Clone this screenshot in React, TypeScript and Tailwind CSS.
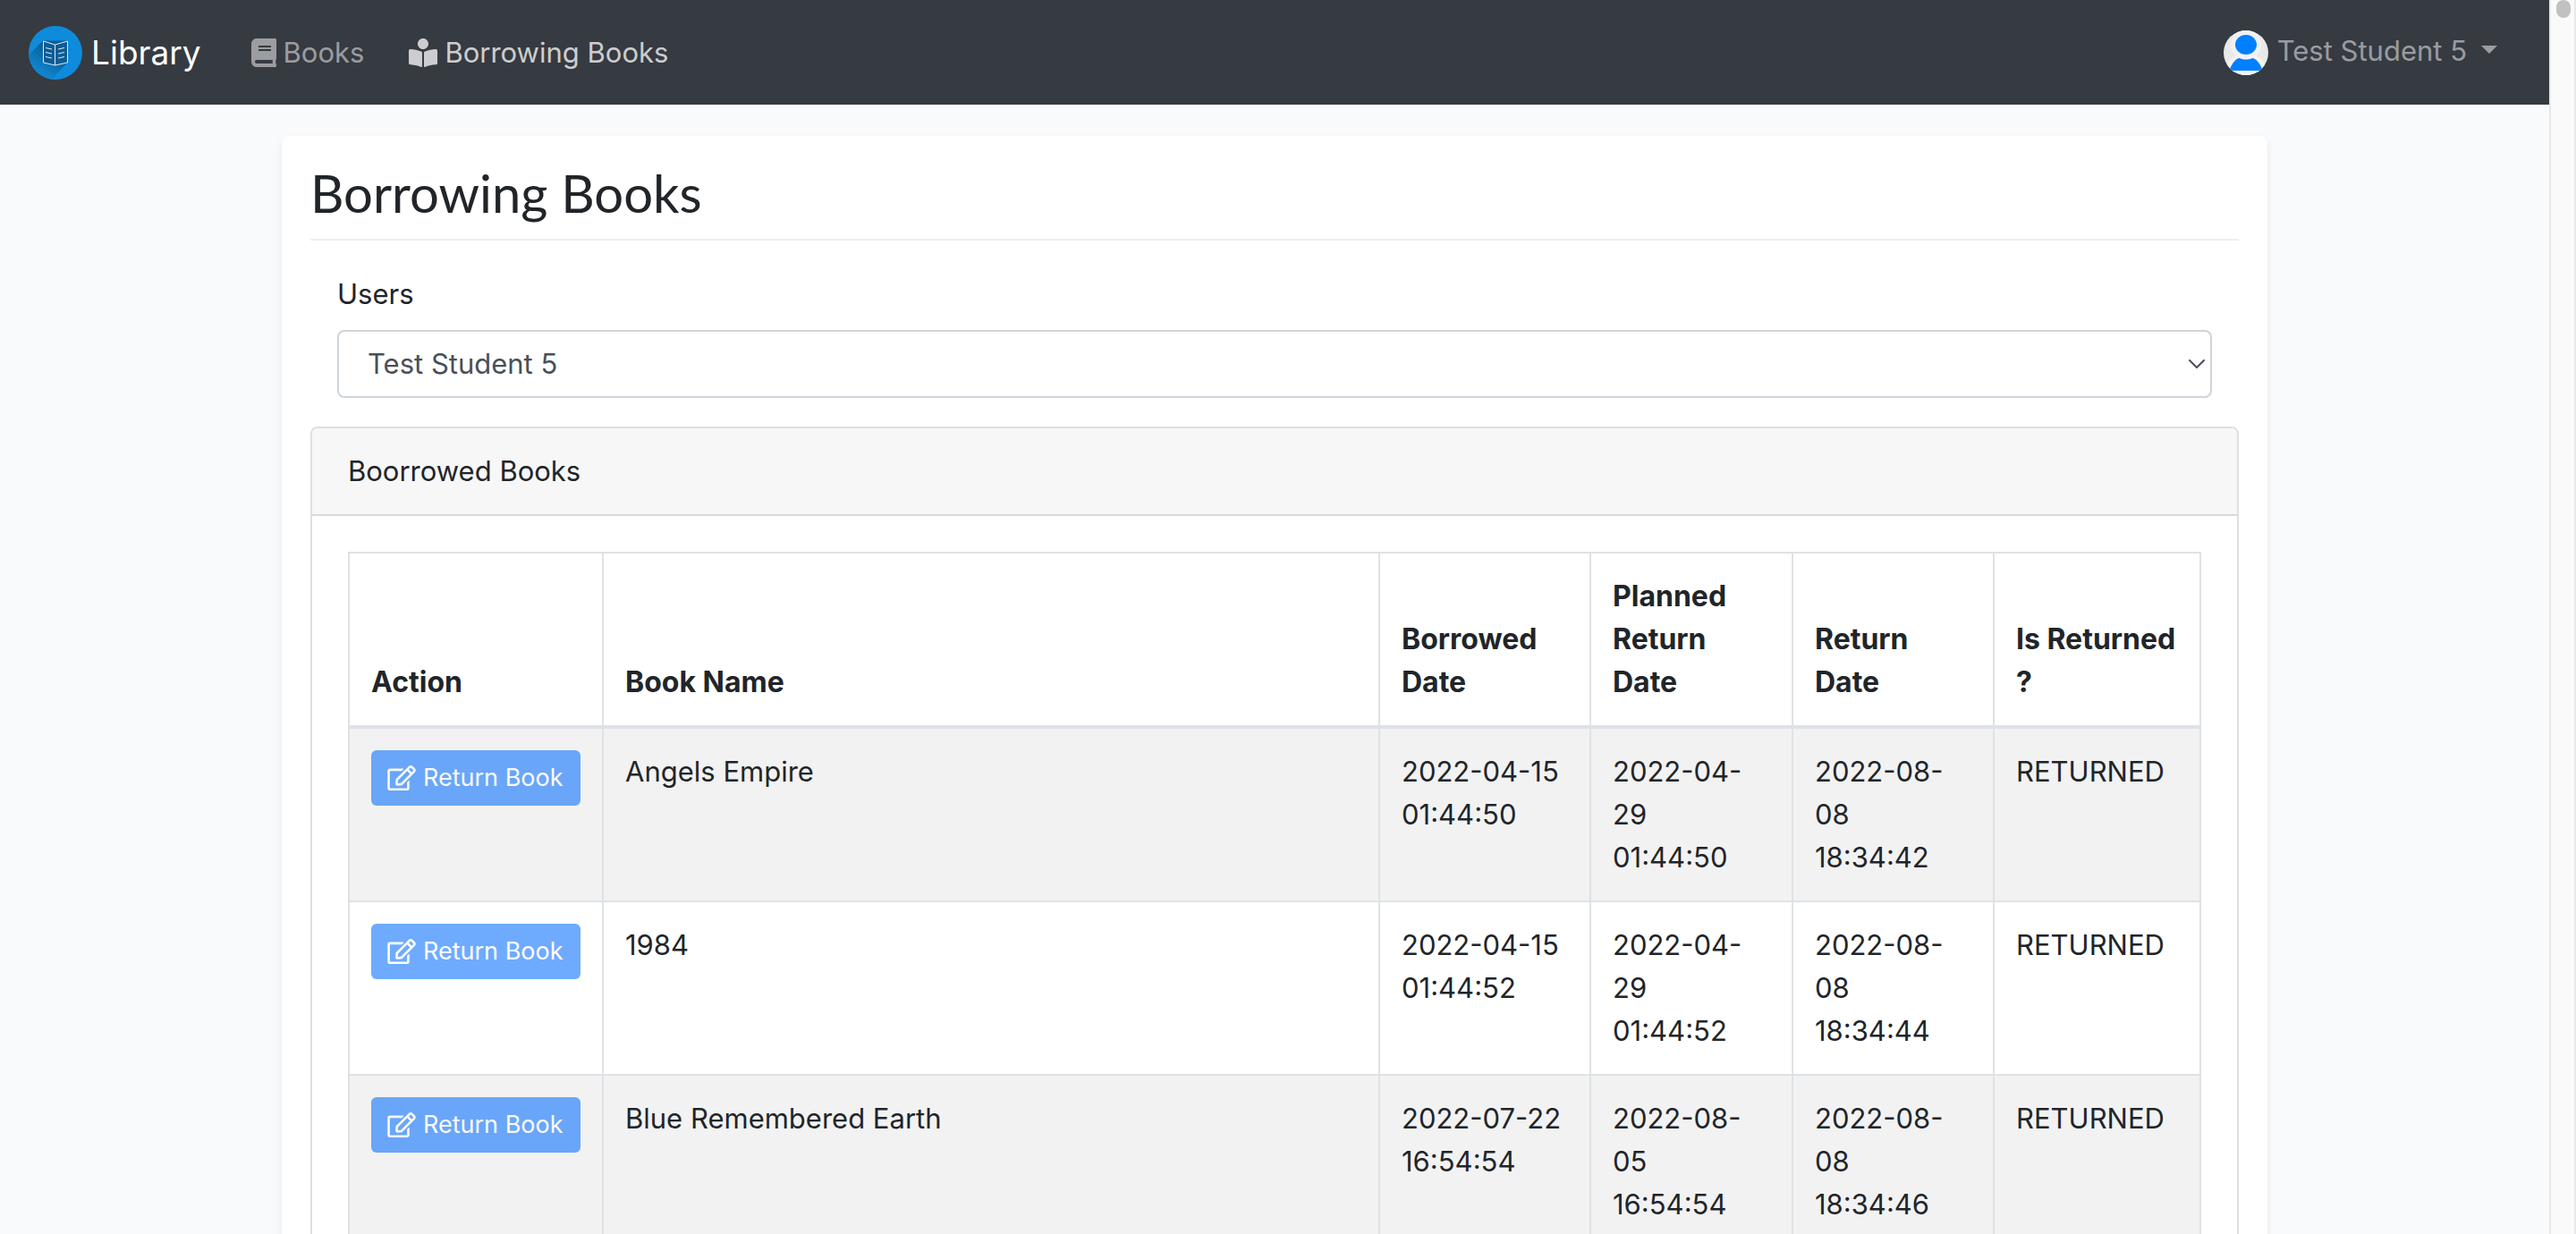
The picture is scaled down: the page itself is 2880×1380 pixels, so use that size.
import { FaBook, FaBookReader, FaRegEdit } from "react-icons/fa";

type Loan = {
  book: string;
  borrowed: string;
  planned: string;
  returned: string;
};

const loans: Loan[] = [
  { book: "Angels Empire", borrowed: "2022-04-15 01:44:50", planned: "2022-04-29 01:44:50", returned: "2022-08-08 18:34:42" },
  { book: "1984", borrowed: "2022-04-15 01:44:52", planned: "2022-04-29 01:44:52", returned: "2022-08-08 18:34:44" },
  { book: "Blue Remembered Earth", borrowed: "2022-07-22 16:54:54", planned: "2022-08-05 16:54:54", returned: "2022-08-08 18:34:46" },
];

function Logo() {
  return (
    <svg viewBox="0 0 60 60" className="size-[60px] shrink-0" aria-hidden="true">
      <defs>
        <clipPath id="disc">
          <circle cx="30" cy="30" r="30" />
        </clipPath>
        <linearGradient id="shade" gradientUnits="userSpaceOnUse" x1="26" y1="26" x2="11" y2="49">
          <stop offset="0" stopColor="#0b5c94" />
          <stop offset="1" stopColor="#0f84cd" />
        </linearGradient>
      </defs>
      <circle cx="30" cy="30" r="30" fill="#0f8bdb" />
      <path clipPath="url(#disc)" d="M16 16.500L-8 40.500L2 84L44 40.500V16.500Z" fill="url(#shade)" />
      <path d="M16.500 17L29.500 21L43.500 17V41L29.500 44L16.500 41Z" fill="#0b5c94" stroke="#dcecf7" strokeWidth="1" />
      <path
        d="M29.500 21V44M19 24.500L26 26M19 29.500L26 31M19 34.500L26 36M33 26L40 24.500M33 31L40 29.500M33 36L40 34.500"
        fill="none"
        stroke="#dcecf7"
        strokeWidth="1"
      />
    </svg>
  );
}

function Avatar() {
  return (
    <svg viewBox="0 0 50 50" className="size-[50px] shrink-0" aria-hidden="true">
      <defs>
        <clipPath id="face">
          <circle cx="25" cy="25" r="25" />
        </clipPath>
      </defs>
      <g clipPath="url(#face)">
        <rect width="50" height="50" fill="#e9e9e9" />
        <circle cx="25" cy="16" r="17" fill="#f1f1f1" />
        <ellipse cx="25" cy="45" rx="23" ry="19" fill="#f4f4f4" />
        <path d="M6 45C10 36 14 31 18 31C22 33 28 33 32 31C36 31 40 36 44 45Z" fill="#0080ff" />
        <rect y="45" width="50" height="5" fill="#f4f4f4" />
        <ellipse cx="25" cy="16" rx="12" ry="11" fill="#0080ff" />
      </g>
    </svg>
  );
}

function Navbar() {
  return (
    <nav className="flex h-[117px] shrink-0 items-center bg-[#363a41] pr-[58px] pl-8">
      <a href="#home" className="flex items-center gap-2.5 text-[37px] text-white">
        <Logo />
        Library
      </a>
      <div className="ml-14 flex items-center gap-[50px]">
        <a href="#books" className="flex items-center gap-2 text-white/50">
          <FaBook className="h-8 w-7" />
          Books
        </a>
        <a href="#borrowing" className="flex items-center gap-2 text-white/75">
          <FaBookReader className="size-8" />
          Borrowing Books
        </a>
      </div>
      <button type="button" className="ml-auto flex items-center text-white/50">
        <Avatar />
        <span className="ml-2.5 pb-1">Test Student 5</span>
        <svg viewBox="0 0 18 9" className="mb-1.5 ml-4 h-[9px] w-[18px]" fill="currentColor" aria-hidden="true">
          <path d="M0 0H18L9 9Z" />
        </svg>
      </button>
    </nav>
  );
}

function LoanTable() {
  const th = "border-2 border-b-4 border-[#dee2e6] p-6 text-left align-bottom text-[32px] font-bold";
  const td = "border-2 border-[#dee2e6] p-6 align-top";
  const dateTd = "border-2 border-[#dee2e6] py-6 pr-7 pl-6 align-top";
  return (
    <table className="w-full table-fixed border-collapse">
      <colgroup>
        <col className="w-[284px]" />
        <col />
        <col className="w-[236px]" />
        <col className="w-[226px]" />
        <col className="w-[225px]" />
        <col className="w-[231px]" />
      </colgroup>
      <thead>
        <tr>
          <th className={th}>Action</th>
          <th className={th}>Book Name</th>
          <th className={th}>Borrowed Date</th>
          <th className={th}>Planned Return Date</th>
          <th className={th}>Return Date</th>
          <th className={th}>Is Returned ?</th>
        </tr>
      </thead>
      <tbody>
        {loans.map((loan) => (
          <tr key={loan.book} className="odd:bg-[#f2f2f2]">
            <td className={td}>
              <button
                type="button"
                disabled
                className="flex h-[62px] w-full items-center gap-2 rounded-md bg-[#0f74ff] px-[18px] text-[27px] whitespace-nowrap text-white opacity-60"
              >
                <FaRegEdit className="h-7 w-8" />
                Return Book
              </button>
            </td>
            <td className={td}>{loan.book}</td>
            <td className={dateTd}>{loan.borrowed}</td>
            <td className={dateTd}>{loan.planned}</td>
            <td className={dateTd}>{loan.returned}</td>
            <td className={td}>RETURNED</td>
          </tr>
        ))}
      </tbody>
    </table>
  );
}

export default function App() {
  return (
    <div className="flex h-screen overflow-hidden bg-[#f8fafc] font-[Inter,'Liberation_Sans',sans-serif] text-[31px] leading-[48px] text-[#212529]">
      <div className="flex min-w-0 flex-1 flex-col">
        <Navbar />
        <main className="min-h-0 flex-1 overflow-y-auto px-[30px] pt-[35px] [scrollbar-width:none]">
          <section className="mx-auto max-w-[2220px] rounded-lg bg-white p-8 shadow-[0_4px_8px_rgba(0,0,0,0.075)]">
            <h1 className="border-b-2 border-[#eeeeee] pb-5 font-[Lato,'Noto_Sans',sans-serif] text-[58px] leading-[63px]">
              Borrowing Books
            </h1>
            <div className="mt-9 px-[30px]">
              <label htmlFor="user" className="mb-4 block">
                Users
              </label>
              <div className="relative">
                <select
                  id="user"
                  className="block h-[76px] w-full appearance-none rounded-lg border-2 border-[#ced4da] bg-white px-8 text-[#495057]"
                >
                  <option>Test Student 5</option>
                </select>
                <svg
                  viewBox="0 0 18 10"
                  className="pointer-events-none absolute top-[33px] right-2 h-2.5 w-[18px]"
                  fill="none"
                  stroke="#495057"
                  strokeWidth="2"
                  strokeLinecap="round"
                  aria-hidden="true"
                >
                  <path d="M1 1L9 9L17 1" />
                </svg>
              </div>
            </div>
            <div className="mt-8 overflow-hidden rounded-lg border-2 border-[#dfdfdf]">
              <h2 className="border-b-2 border-[#d9d9d9] bg-[#f7f7f7] px-10 py-6">Boorrowed Books</h2>
              <div className="p-10">
                <LoanTable />
              </div>
            </div>
          </section>
        </main>
      </div>
      <div className="w-[30px] shrink-0 border-x-2 border-[#e8e8e8] bg-[#fafafa] px-1.5" aria-hidden="true">
        <div className="h-5 w-4 rounded-full bg-[#c1c1c1]" />
      </div>
    </div>
  );
}
